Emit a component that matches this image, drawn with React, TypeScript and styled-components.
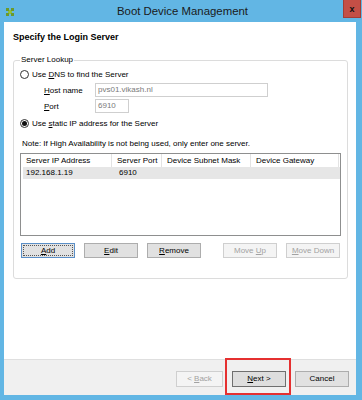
import styled, { createGlobalStyle, css } from 'styled-components'

const GlobalStyle = createGlobalStyle`
  html, body {
    margin: 0;
    padding: 0;
    background: #62b6e4;
  }
  body {
    font-family: "Liberation Sans", Arial, sans-serif;
  }
  * {
    box-sizing: border-box;
  }
`

const Window = styled.div`
  width: 362px;
  height: 400px;
  background: #62b6e4;
  display: flex;
  flex-direction: column;
  padding: 0 6px 5px 4px;
`

const TitleBar = styled.div`
  height: 22px;
  margin-right: -5px;
  display: grid;
  grid-template-columns: 1fr auto 1fr;
  align-items: start;
`

const AppIcon = styled.svg`
  margin: 8px 0 0 2px;
  width: 8px;
  height: 8px;
`

const TitleText = styled.div`
  font-size: 11.4px;
  line-height: 23px;
  color: #1a1a1a;
  white-space: nowrap;
`

const CloseButton = styled.div`
  justify-self: end;
  width: 18px;
  height: 18px;
  background: #c44f46;
  border: 1px solid #a33d36;
  border-top: none;
  display: flex;
  align-items: center;
  justify-content: center;
  font-size: 9px;
  font-weight: bold;
  color: #111;
`

const Client = styled.div`
  flex: 1;
  display: flex;
  flex-direction: column;
  background: #ffffff;
`

const Content = styled.div`
  flex: 1;
  padding: 10px 8px 0 9px;
`

const Heading = styled.div`
  font-size: 9px;
  font-weight: bold;
  line-height: 11px;
  color: #000;
`

const GroupBox = styled.fieldset`
  margin: 12px 0 0 0;
  padding: 0 6px 20px 6px;
  border: 1px solid #dcdcdc;
  border-radius: 3px;
  min-width: 0;
`

const Legend = styled.legend`
  padding: 0 1px;
  margin-left: 0;
  font-size: 8px;
  line-height: 10px;
  color: #000;
`

const Text = styled.span`
  font-size: 8px;
  line-height: 11px;
  color: #000;
  white-space: nowrap;
`

const RadioRow = styled.div<{ $top: number }>`
  display: flex;
  align-items: center;
  gap: 3px;
  height: 12px;
  margin-top: ${({ $top }) => $top}px;
`

const Radio = styled.span<{ $checked?: boolean }>`
  width: 9px;
  height: 9px;
  border-radius: 50%;
  border: 1px solid #333;
  background: #fff;
  display: flex;
  align-items: center;
  justify-content: center;

  ${({ $checked }) =>
    $checked &&
    css`
      &::after {
        content: '';
        width: 5px;
        height: 5px;
        border-radius: 50%;
        background: #111;
      }
    `}
`

const FieldRow = styled.div<{ $top: number }>`
  display: flex;
  align-items: center;
  margin-top: ${({ $top }) => $top}px;
  padding-left: 24px;
`

const FieldLabel = styled(Text)`
  width: 51px;
`

const Input = styled.div<{ $width: number }>`
  width: ${({ $width }) => $width}px;
  height: 14px;
  border: 1px solid #cfcfcf;
  background: #fff;
  padding: 0 2px;
  font-size: 8px;
  line-height: 12px;
  color: #7a7a7a;
`

const Note = styled(Text)`
  display: block;
  margin: 9px 0 0 2px;
`

const ListView = styled.div`
  margin-top: 4px;
  height: 83px;
  border: 1px solid #8e8f8f;
  background: #fff;
`

const ListRow = styled.div<{ $header?: boolean; $selected?: boolean }>`
  display: grid;
  grid-template-columns: 91px 50px 89px 88px;
  height: ${({ $header }) => ($header ? 13 : 12)}px;
  margin-left: ${({ $header }) => ($header ? 0 : 2)}px;
  background: ${({ $selected }) => ($selected ? '#e6e6e6' : 'transparent')};
`

const Cell = styled.div<{ $header?: boolean; $first?: boolean }>`
  font-size: 8px;
  line-height: ${({ $header }) => ($header ? 13 : 12)}px;
  color: #000;
  white-space: nowrap;
  overflow: hidden;
  padding-left: ${({ $first, $header }) => ($first && !$header ? 3 : 5)}px;
  border-right: ${({ $header }) => ($header ? '1px solid #e3e3e3' : 'none')};
`

const ButtonRow = styled.div`
  display: flex;
  justify-content: space-between;
  margin-top: 7px;
  padding: 0 1px;
`

const ButtonGroup = styled.div`
  display: flex;
  gap: 9px;
`

const Button = styled.div<{ $disabled?: boolean; $focused?: boolean; $default?: boolean; $width?: number; $height?: number }>`
  width: ${({ $width }) => $width ?? 54}px;
  height: ${({ $height }) => $height ?? 15}px;
  line-height: ${({ $height }) => ($height ?? 15) - 2}px;
  text-align: center;
  white-space: nowrap;
  font-size: 8px;
  color: #000;
  background: #e1e1e1;
  border: 1px solid #adadad;

  ${({ $focused }) =>
    $focused &&
    css`
      border-color: #5b8fc7;
      outline: 1px dotted #555;
      outline-offset: -3px;
    `}

  ${({ $default }) =>
    $default &&
    css`
      border-color: #6f6f6f;
      background: #dedede;
    `}

  ${({ $disabled }) =>
    $disabled &&
    css`
      color: #a2a2a2;
      background: #f4f4f4;
      border-color: #cfcfcf;
    `}
`

const Footer = styled.div`
  height: 36px;
  background: #f0f0f0;
  border-top: 1px solid #dfdfdf;
  display: flex;
  justify-content: flex-end;
  gap: 9px;
  padding: 11px 7px 0 0;
`

const Highlighted = styled.div`
  position: relative;
`

const RedBox = styled.div`
  position: absolute;
  left: -7px;
  top: -13px;
  width: 66px;
  height: 37px;
  border: 2px solid #e53030;
  pointer-events: none;
`

const columns = ['Server IP Address', 'Server Port', 'Device Subnet Mask', 'Device Gateway']

const App = () => {
  return (
    <>
      <GlobalStyle />
      <Window>
        <TitleBar>
          <AppIcon viewBox="0 0 8 8">
            <rect x="0" y="0" width="3" height="3" fill="#6b9a2a" />
            <rect x="5" y="0" width="3" height="3" fill="#6b9a2a" />
            <rect x="0" y="5" width="3" height="3" fill="#6b9a2a" />
            <rect x="5" y="5" width="3" height="3" fill="#6b9a2a" />
            <rect x="2" y="3" width="4" height="2" fill="#8fbf3c" />
            <rect x="3" y="2" width="2" height="4" fill="#8fbf3c" />
          </AppIcon>
          <TitleText>Boot Device Management</TitleText>
          <CloseButton>x</CloseButton>
        </TitleBar>
        <Client>
          <Content>
            <Heading>Specify the Login Server</Heading>
            <GroupBox>
              <Legend>Server Lookup</Legend>
              <RadioRow $top={3}>
                <Radio />
                <Text>Use <u>D</u>NS to find the Server</Text>
              </RadioRow>
              <FieldRow $top={3}>
                <FieldLabel><u>H</u>ost name</FieldLabel>
                <Input $width={173}>pvs01.vikash.nl</Input>
              </FieldRow>
              <FieldRow $top={2}>
                <FieldLabel><u>P</u>ort</FieldLabel>
                <Input $width={34}>6910</Input>
              </FieldRow>
              <RadioRow $top={4}>
                <Radio $checked />
                <Text>Use <u>s</u>tatic IP address for the Server</Text>
              </RadioRow>
              <Note>Note: If High Availability is not being used, only enter one server.</Note>
              <ListView>
                <ListRow $header>
                  {columns.map((c) => (
                    <Cell key={c} $header>{c}</Cell>
                  ))}
                </ListRow>
                <ListRow $selected>
                  <Cell $first>192.168.1.19</Cell>
                  <Cell>6910</Cell>
                  <Cell />
                  <Cell />
                </ListRow>
              </ListView>
              <ButtonRow>
                <ButtonGroup>
                  <Button $focused><u>A</u>dd</Button>
                  <Button><u>E</u>dit</Button>
                  <Button><u>R</u>emove</Button>
                </ButtonGroup>
                <ButtonGroup>
                  <Button $disabled>Move <u>U</u>p</Button>
                  <Button $disabled><u>M</u>ove Down</Button>
                </ButtonGroup>
              </ButtonRow>
            </GroupBox>
          </Content>
          <Footer>
            <Button $disabled $width={47} $height={16}>&lt; <u>B</u>ack</Button>
            <Highlighted>
              <Button $default $height={16}><u>N</u>ext &gt;</Button>
              <RedBox />
            </Highlighted>
            <Button $height={16}>Cancel</Button>
          </Footer>
        </Client>
      </Window>
    </>
  )
}

export default App
